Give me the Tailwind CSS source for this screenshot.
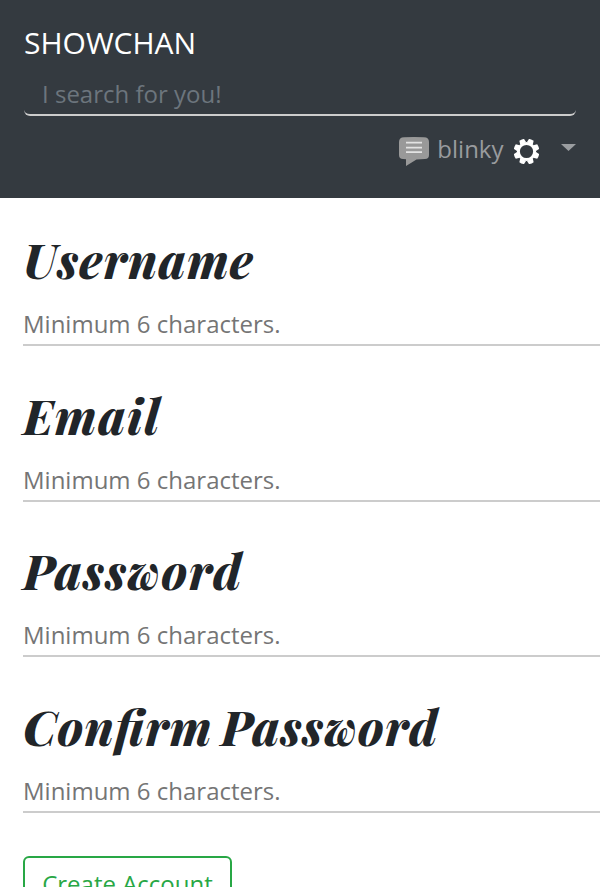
<!DOCTYPE html>
<html lang="en">
<head>
<meta charset="utf-8">
<title>Showchan</title>
<script src="https://cdn.jsdelivr.net/npm/@tailwindcss/browser@4"></script>
</head>
<body class="h-[887px] overflow-hidden bg-white font-['Open_Sans',sans-serif] text-2xl text-[#212529]">
<header class="flex h-[198px] flex-col bg-[#343a40] px-6 pt-[20px]">
  <a class="h-[45px] text-[30px] leading-[45px] text-white">SHOWCHAN</a>
  <input type="text" placeholder="I search for you!" class="mt-[8px] h-[43px] w-full rounded-md border-b-2 border-[#ccc] bg-transparent px-[18px] placeholder:text-[#6c757d]">
  <div class="mt-[15px] flex h-[36px] items-center justify-end text-[#999b9e]">
    <svg class="mt-[5px] mr-[8px] h-[30px] w-[30px]" viewBox="0 0 30 30">
      <path fill="#999" d="M5 .3Q15-.3 25 .3Q30 .5 30 5V18Q30 22 26 22L17.5 22.5L7 29V22.3L4 22Q0 22 0 18V5Q0 .5 5 .3Z"/>
      <path stroke="#e3e3e3" stroke-width="1.8" d="M7 5.7H23M7 10.7H23M7 15.2H23"/>
    </svg>
    <span class="leading-9">blinky</span>
    <svg class="mt-1 ml-[10.5px] h-[25px] w-[25px]" viewBox="-12.5 -12.5 25 25">
      <g fill="#fff">
        <path fill-rule="evenodd" d="M-9.6 0A9.6 9.6 0 1 0 9.6 0A9.6 9.6 0 1 0-9.6 0ZM-6.6 0A6.6 6.6 0 1 1 6.6 0A6.6 6.6 0 1 1-6.6 0Z"/>
        <g transform="rotate(22.5)">
          <path id="tooth" d="M-3.2-8.6L-2.5-12.6Q0-13.3 2.5-12.6L3.2-8.6Z"/>
          <use href="#tooth" transform="rotate(45)"/><use href="#tooth" transform="rotate(90)"/><use href="#tooth" transform="rotate(135)"/><use href="#tooth" transform="rotate(180)"/><use href="#tooth" transform="rotate(225)"/><use href="#tooth" transform="rotate(270)"/><use href="#tooth" transform="rotate(315)"/>
        </g>
      </g>
    </svg>
    <svg class="mb-1 ml-[22px] h-[7px] w-[15px]" viewBox="0 0 15 7"><path fill="#9a9da0" d="M0 0H15L7.5 7Z"/></svg>
  </div>
</header>
<form class="ml-[23px] flex flex-col pt-[29px]">
  <label class="block h-[155.67px]">
    <span class="block h-[76px] font-['Playfair_Display','Liberation_Serif',serif] text-5xl leading-[64px] font-extrabold tracking-[1.1px] whitespace-nowrap italic">Username</span>
    <input placeholder="Minimum 6 characters." class="block h-[43px] w-full border-b-2 border-[#ccc] placeholder:text-[#757575]">
  </label>
  <label class="block h-[155.67px]">
    <span class="block h-[76px] font-['Playfair_Display','Liberation_Serif',serif] text-5xl leading-[64px] font-extrabold tracking-[1.5px] whitespace-nowrap italic">Email</span>
    <input placeholder="Minimum 6 characters." class="block h-[43px] w-full border-b-2 border-[#ccc] placeholder:text-[#757575]">
  </label>
  <label class="block h-[155.67px]">
    <span class="block h-[76px] font-['Playfair_Display','Liberation_Serif',serif] text-5xl leading-[64px] font-extrabold tracking-[1.4px] whitespace-nowrap italic">Password</span>
    <input placeholder="Minimum 6 characters." class="block h-[43px] w-full border-b-2 border-[#ccc] placeholder:text-[#757575]">
  </label>
  <label class="block h-[155.67px]">
    <span class="block h-[76px] font-['Playfair_Display','Liberation_Serif',serif] text-5xl leading-[64px] font-extrabold tracking-[1.1px] whitespace-nowrap italic [font-feature-settings:'liga'_1] [word-spacing:-5px]">Confirm Password</span>
    <input placeholder="Minimum 6 characters." class="block h-[43px] w-full border-b-2 border-[#ccc] placeholder:text-[#757575]">
  </label>
  <button type="button" class="mt-[6px] h-[57px] w-[209px] rounded-md border-2 border-[#28a745] text-[#28a745]">Create Account</button>
</form>
</body>
</html>
